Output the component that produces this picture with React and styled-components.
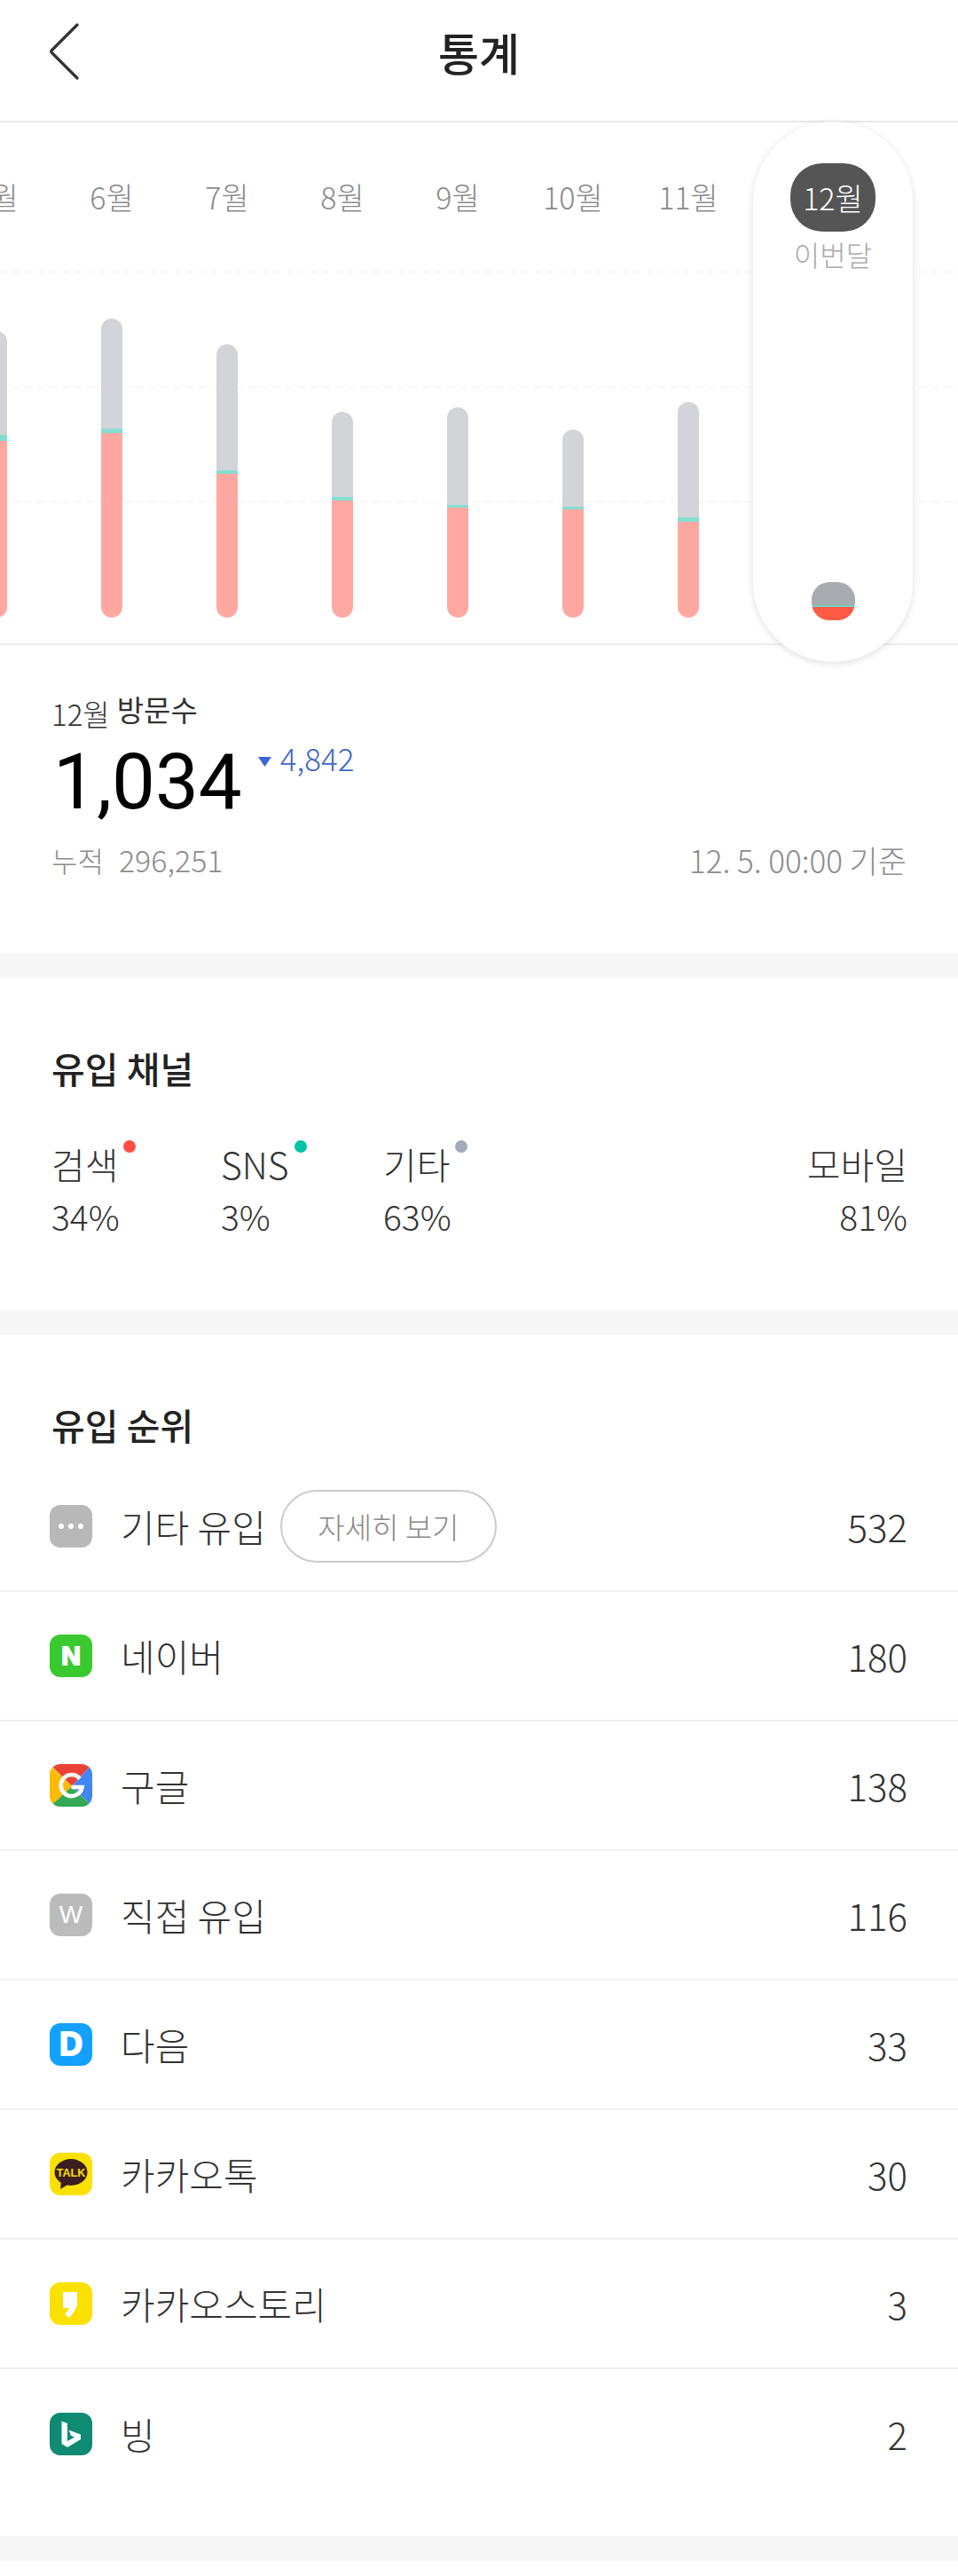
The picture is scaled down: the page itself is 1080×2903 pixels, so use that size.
import React from 'react'
import styled, { createGlobalStyle } from 'styled-components'

const GlobalStyle = createGlobalStyle`
  html, body {
    margin: 0;
    padding: 0;
    background: #fff;
  }
  body {
    font-family: "Noto Sans CJK KR", "Noto Sans", sans-serif;
    color: #333;
  }
`

const Page = styled.div`
  width: 1080px;
  min-height: 2903px;
  overflow: hidden;
  background: #fff;
`

const Header = styled.header`
  display: grid;
  grid-template-columns: 1fr auto 1fr;
  align-items: center;
  box-sizing: border-box;
  height: 138px;
  padding: 0 55px 20px;
  border-bottom: 2px solid #e9e9e9;
`

const BackIcon = styled.svg`
  display: block;
  width: 36px;
  height: 66px;
`

const Title = styled.h1`
  margin: 0;
  font-size: 50px;
  line-height: 60px;
  font-weight: 500;
  color: #222;
`

const Chart = styled.section`
  position: relative;
  height: 587px;
  border-bottom: 2px solid #eee;
`

const GridLines = styled.div`
  position: absolute;
  left: 0;
  right: 0;
  top: 168px;
  display: flex;
  flex-direction: column;
  gap: 128.5px;
`

const GridLine = styled.div`
  height: 1px;
  background: repeating-linear-gradient(to right, #f1f1f1 0 8px, transparent 8px 14px);
`

const Track = styled.div`
  position: relative;
  display: flex;
  height: 100%;
  margin-left: -69px;
`

const MonthColumn = styled.div`
  display: flex;
  flex: 0 0 130px;
  flex-direction: column;
  align-items: center;
  padding: 62px 0 29px;
  box-sizing: border-box;
`

const MonthLabel = styled.span`
  font-size: 34px;
  line-height: 44px;
  font-weight: 300;
  color: #8a8a8a;
  white-space: nowrap;
`

const Bar = styled.div`
  display: flex;
  flex-direction: column;
  width: 24px;
  margin-top: auto;
  border-radius: 12px;
  overflow: hidden;
`

const BarPart = styled.div`
  background: ${p => p.$color};
`

const CurrentPill = styled.div`
  position: absolute;
  left: 849px;
  top: -1px;
  z-index: 2;
  display: flex;
  flex-direction: column;
  align-items: center;
  box-sizing: border-box;
  width: 180px;
  height: 609px;
  padding: 47px 0;
  border-radius: 90px;
  background: #fff;
  box-shadow: 0 2px 8px rgba(0, 0, 0, 0.13);
`

const CurrentMonth = styled.div`
  display: flex;
  align-items: center;
  justify-content: center;
  width: 96px;
  height: 77px;
  border-radius: 36px;
  background: #555;
  color: #fff;
  font-size: 34px;
  font-weight: 300;
`

const CurrentCaption = styled.div`
  margin-top: 4px;
  font-size: 32px;
  line-height: 42px;
  font-weight: 300;
  color: #aaa;
`

const MiniBar = styled.div`
  display: flex;
  flex-direction: column;
  width: 49px;
  height: 43px;
  margin-top: auto;
  border-radius: 20px;
  overflow: hidden;
`

const Visits = styled.section`
  height: 347px;
  box-sizing: border-box;
  padding: 48px 58px 0;
`

const VisitLabel = styled.div`
  display: flex;
  align-items: flex-start;
  gap: 8px;
  height: 48px;
  font-size: 33px;
  line-height: 48px;
  font-weight: 400;
  color: #333;
`

const VisitMonth = styled.span`
  padding-top: 5px;
  font-size: 33px;
  font-weight: 300;
`

const VisitCount = styled.div`
  display: flex;
  align-items: flex-start;
  margin-top: 6px;
  height: 104px;
`

const CountValue = styled.span`
  margin-left: 2px;
  font-family: Roboto, sans-serif;
  font-size: 87px;
  line-height: 104px;
  font-weight: 400;
  color: #000;
`

const DiffArrow = styled.svg`
  width: 15px;
  height: 11px;
  margin: 24px 10px 0 18px;
`

const DiffValue = styled.span`
  margin-top: 3px;
  font-size: 35px;
  line-height: 44px;
  font-weight: 300;
  color: #3f66c8;
`

const VisitFoot = styled.div`
  display: flex;
  justify-content: space-between;
  margin-top: 14px;
  line-height: 44px;
  font-weight: 300;
  color: #8c8c8c;
`

const FootTotal = styled.span`
  display: flex;
  gap: 17px;
  font-size: 32px;
`

const FootNumber = styled.span`
  font-size: 34px;
`

const FootTime = styled.span`
  font-size: 35px;
`

const Band = styled.div`
  height: 28px;
  background: #f7f7f7;
`

const Channels = styled.section`
  height: 374px;
  box-sizing: border-box;
  padding: 72px 57px 0 58px;
`

const SectionTitle = styled.h2`
  margin: 0;
  font-size: 41px;
  line-height: 58px;
  font-weight: 500;
  color: #222;
`

const ChannelGrid = styled.div`
  display: grid;
  grid-template-columns: 191px 183px 1fr auto;
  margin-top: 51px;
`

const Channel = styled.div`
  display: flex;
  flex-direction: column;
  align-items: ${p => (p.$right ? 'flex-end' : 'flex-start')};
  grid-column: ${p => p.$column};
`

const ChannelName = styled.div`
  display: flex;
  font-size: 41px;
  line-height: 56px;
  font-weight: 300;
  color: #333;
`

const ChannelDot = styled.i`
  width: 14px;
  height: 14px;
  margin: 2px 0 0 6px;
  border-radius: 50%;
  background: ${p => p.$color};
`

const ChannelShare = styled.div`
  margin-top: 6px;
  font-size: 39px;
  line-height: 50px;
  font-weight: 300;
  color: #333;
`

const Ranking = styled.section`
  box-sizing: border-box;
  height: 1354px;
  padding-top: 72px;
`

const RankTitle = styled(SectionTitle)`
  padding: 0 58px;
  margin-bottom: 14px;
`

const RankRow = styled.div`
  display: flex;
  align-items: center;
  height: 146px;
  box-sizing: border-box;
  padding: 0 57px 0 56px;
  border-bottom: ${p => (p.$last ? 'none' : '2px solid #f0f0f0')};
`

const Tile = styled.div`
  display: flex;
  align-items: center;
  justify-content: center;
  flex: none;
  width: 48px;
  height: 48px;
  border-radius: 12px;
  overflow: hidden;
  background: ${p => p.$bg};
  color: #fff;
  font-family: "Liberation Sans", sans-serif;
  font-size: ${p => p.$size || 34}px;
  font-weight: ${p => p.$weight || 700};
  line-height: 1;
  -webkit-text-stroke: ${p => p.$stroke || 0}px #fff;
`

const TileArt = styled.svg`
  display: block;
  width: 48px;
  height: 48px;
`

const RankName = styled.span`
  margin-left: 32px;
  font-size: 42px;
  line-height: 56px;
  font-weight: 300;
  color: #333;
  white-space: nowrap;
`

const DetailButton = styled.button`
  width: 244px;
  height: 82px;
  margin-left: 16px;
  padding: 0;
  border: 2px solid #ccc;
  border-radius: 41px;
  background: #fff;
  font-family: inherit;
  font-size: 33px;
  font-weight: 300;
  color: #888;
`

const RankCount = styled.span`
  margin-left: auto;
  font-size: 42px;
  line-height: 56px;
  font-weight: 300;
  color: #333;
`

const months = [
  { name: '5월', gray: 117, green: 7, pink: 199 },
  { name: '6월', gray: 124, green: 5, pink: 208 },
  { name: '7월', gray: 142, green: 4, pink: 162 },
  { name: '8월', gray: 96, green: 4, pink: 132 },
  { name: '9월', gray: 110, green: 3, pink: 124 },
  { name: '10월', gray: 87, green: 3, pink: 122 },
  { name: '11월', gray: 130, green: 5, pink: 108 },
]

const channels = [
  { name: '검색', share: '34%', dot: '#ff5043' },
  { name: 'SNS', share: '3%', dot: '#00c4a7' },
  { name: '기타', share: '63%', dot: '#a3abb7' },
  { name: '모바일', share: '81%', right: true },
]

const MoreIcon = () => (
  <Tile $bg="#b8b8b8">
    <TileArt viewBox="0 0 48 48">
      <circle cx="13" cy="24" r="3" fill="#fff" />
      <circle cx="24" cy="24" r="3" fill="#fff" />
      <circle cx="35" cy="24" r="3" fill="#fff" />
    </TileArt>
  </Tile>
)

const GoogleIcon = () => (
  <Tile $bg="#fff">
    <TileArt viewBox="0 0 48 48">
      <polygon points="0,0 48,0 25,25" fill="#ea4335" />
      <polygon points="48,0 48,48 25,25" fill="#4285f4" />
      <polygon points="0,48 48,48 25,25" fill="#34a853" />
      <polygon points="0,0 0,48 25,25" fill="#fbbc05" />
      <path d="M34 16.5A12 12 0 1 0 36.5 26H24.5" fill="none" stroke="#fff" strokeWidth="4.6" />
    </TileArt>
  </Tile>
)

const TalkIcon = () => (
  <Tile $bg="#fae100">
    <TileArt viewBox="0 0 48 48">
      <ellipse cx="24" cy="22" rx="18.5" ry="15" fill="#3c1e1e" />
      <polygon points="13,31 12,41 22,35" fill="#3c1e1e" />
      <text x="24" y="27" textAnchor="middle" fontFamily="Liberation Sans" fontWeight="700" fontSize="12.5" fill="#fae100">TALK</text>
    </TileArt>
  </Tile>
)

const StoryIcon = () => (
  <Tile $bg="#fae100">
    <TileArt viewBox="0 0 48 48">
      <path d="M15 11H31V24C31 30 25 36 22 40L17 36C19 34 21 31 22 29H15Z" fill="#fff" />
    </TileArt>
  </Tile>
)

const BingIcon = () => (
  <Tile $bg="#0f8a73">
    <TileArt viewBox="0 0 48 48">
      <path d="M13.5 9.5L20 12V32L28 27.5L24 25.7L21.5 19.5L35 24.5V30L20 39L13.5 35Z" fill="#fff" />
    </TileArt>
  </Tile>
)

const ranks = [
  { name: '기타 유입', count: 532, icon: <MoreIcon />, more: true },
  { name: '네이버', count: 180, icon: <Tile $bg="#3ac92f" $size={30} $stroke={2}>N</Tile> },
  { name: '구글', count: 138, icon: <GoogleIcon /> },
  { name: '직접 유입', count: 116, icon: <Tile $bg="#bbb" $size={28} $weight={400}>W</Tile> },
  { name: '다음', count: 33, icon: <Tile $bg="#14a0ff" $size={36} $stroke={2}>D</Tile> },
  { name: '카카오톡', count: 30, icon: <TalkIcon /> },
  { name: '카카오스토리', count: 3, icon: <StoryIcon /> },
  { name: '빙', count: 2, icon: <BingIcon /> },
]

const App = () => (
  <Page>
    <GlobalStyle />
    <Header>
      <BackIcon viewBox="0 0 36 66" aria-label="뒤로">
        <path d="M32 3L3.5 31.5Q2 33 3.5 34.5L32 63" fill="none" stroke="#333" strokeWidth="3.2" strokeLinecap="round" />
      </BackIcon>
      <Title>통계</Title>
    </Header>

    <Chart>
      <GridLines>
        <GridLine />
        <GridLine />
        <GridLine />
      </GridLines>
      <Track>
        {months.map(m => (
          <MonthColumn key={m.name}>
            <MonthLabel>{m.name}</MonthLabel>
            <Bar>
              <BarPart $color="#d2d4d8" style={{ height: m.gray }} />
              <BarPart $color="#84dfd1" style={{ height: m.green }} />
              <BarPart $color="#ffa8a2" style={{ height: m.pink }} />
            </Bar>
          </MonthColumn>
        ))}
      </Track>
      <CurrentPill>
        <CurrentMonth>12월</CurrentMonth>
        <CurrentCaption>이번달</CurrentCaption>
        <MiniBar>
          <BarPart $color="#a8abb0" style={{ height: 26 }} />
          <BarPart $color="#6fcfc0" style={{ height: 2 }} />
          <BarPart $color="#ff5a46" style={{ height: 15 }} />
        </MiniBar>
      </CurrentPill>
    </Chart>

    <Visits>
      <VisitLabel>
        <VisitMonth>12월</VisitMonth>
        방문수
      </VisitLabel>
      <VisitCount>
        <CountValue>1,034</CountValue>
        <DiffArrow viewBox="0 0 15 11">
          <polygon points="0,0 15,0 7.5,11" fill="#3b65d1" />
        </DiffArrow>
        <DiffValue>4,842</DiffValue>
      </VisitCount>
      <VisitFoot>
        <FootTotal>
          누적
          <FootNumber>296,251</FootNumber>
        </FootTotal>
        <FootTime>12. 5. 00:00 기준</FootTime>
      </VisitFoot>
    </Visits>
    <Band />

    <Channels>
      <SectionTitle>유입 채널</SectionTitle>
      <ChannelGrid>
        {channels.map((c, i) => (
          <Channel key={c.name} $right={c.right} $column={i + 1}>
            <ChannelName>
              {c.name}
              {c.dot && <ChannelDot $color={c.dot} />}
            </ChannelName>
            <ChannelShare>{c.share}</ChannelShare>
          </Channel>
        ))}
      </ChannelGrid>
    </Channels>
    <Band />

    <Ranking>
      <RankTitle>유입 순위</RankTitle>
      {ranks.map((r, i) => (
        <RankRow key={r.name} $last={i === ranks.length - 1}>
          {r.icon}
          <RankName>{r.name}</RankName>
          {r.more && <DetailButton>자세히 보기</DetailButton>}
          <RankCount>{r.count}</RankCount>
        </RankRow>
      ))}
    </Ranking>
    <Band />
  </Page>
)

export default App
